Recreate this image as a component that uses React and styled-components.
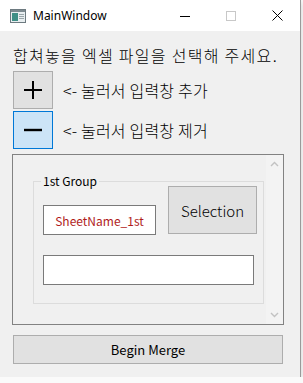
import React from 'react'
import styled, { createGlobalStyle } from 'styled-components'

const Global = createGlobalStyle`
  html, body { margin: 0; padding: 0; background: #fafafa; }
  body { font-family: "Noto Sans CJK KR", "Noto Sans", sans-serif; }
`

const Window = styled.div`
  width: 300px;
  height: 377px;
  background: #f0f0f0;
  border-right: 1px solid #9a9a9a;
  box-shadow: 0 2px 6px rgba(0,0,0,0.18);
  display: flex;
  flex-direction: column;
`

const TitleBar = styled.div`
  height: 31px;
  background: #fff;
  display: flex;
  align-items: center;
  flex-shrink: 0;
`

const AppIcon = styled.svg`
  margin-left: 10px;
  width: 16px;
  height: 14px;
`

const Title = styled.span`
  margin-left: 7px;
  font-family: "Noto Sans", sans-serif;
  font-size: 12px;
  color: #000;
  flex: 1;
`

const Caption = styled.div`
  width: 46px;
  height: 31px;
  display: flex;
  align-items: center;
  justify-content: center;
`

const Body = styled.div`
  padding: 14px 0 0 12px;
  display: flex;
  flex-direction: column;
`

const Label = styled.div`
  font-size: 16px;
  font-weight: 300;
  letter-spacing: 1.3px;
  line-height: 20px;
  height: 20px;
  margin-left: 1px;
  color: #000;
  white-space: nowrap;
`

const Row = styled.div`
  display: flex;
  align-items: center;
  margin-top: ${p => p.$top}px;
  margin-left: 1px;
`

const SquareButton = styled.div`
  box-sizing: border-box;
  width: 40px;
  height: 38px;
  background: ${p => (p.$active ? '#cce4f7' : '#e1e1e1')};
  border: 1px solid ${p => (p.$active ? '#0078d7' : '#adadad')};
  display: flex;
  align-items: center;
  justify-content: center;
`

const Hint = styled.span`
  margin-left: 10px;
  font-size: 16px;
  font-weight: 300;
  letter-spacing: 0.2px;
  color: #000;
  white-space: nowrap;
`

const ScrollArea = styled.div`
  box-sizing: border-box;
  margin-top: 5px;
  width: 272px;
  height: 171px;
  border: 1px solid #828282;
  display: flex;
`

const ScrollContent = styled.div`
  flex: 1;
  padding: 19px 2px 0 20px;
`

const Group = styled.fieldset`
  margin: 0;
  padding: 0 5px 18px 9px;
  border: 1px solid #dcdcdc;
  min-width: 0;
`

const Legend = styled.legend`
  padding: 0 2px;
  margin-left: -2px;
  font-size: 12px;
  line-height: 14px;
  color: #000;
`

const GroupRow = styled.div`
  display: flex;
  align-items: flex-end;
  margin-top: -2px;
`

const Field = styled.div`
  box-sizing: border-box;
  width: ${p => p.$w}px;
  height: 30px;
  background: #fff;
  border: 1px solid #7a7a7a;
  display: flex;
  align-items: center;
  justify-content: center;
  color: #b01c1c;
  font-size: 12px;
  margin-top: ${p => p.$top || 0}px;
`

const Button = styled.div`
  box-sizing: border-box;
  background: #e1e1e1;
  border: 1px solid #adadad;
  display: flex;
  align-items: center;
  justify-content: center;
  color: #000;
`

const SelectButton = styled(Button)`
  width: 89px;
  height: 48px;
  margin-left: 12px;
  margin-bottom: 1px;
  font-size: 15px;
  font-weight: 300;
`

const MergeButton = styled(Button)`
  width: 270px;
  height: 29px;
  margin-top: 10px;
  margin-left: 1px;
  font-size: 13px;
`

const ScrollBar = styled.div`
  width: 17px;
  background: #f3f3f3;
  display: flex;
  flex-direction: column;
  justify-content: space-between;
  align-items: center;
  padding: 6px 0;
`

const Chevron = ({ down }) => (
  <svg width="9" height="6" viewBox="0 0 9 6">
    <path
      d={down ? 'M1 1 L4.5 4.5 L8 1' : 'M1 5 L4.5 1.5 L8 5'}
      fill="none"
      stroke="#c2c2c2"
      strokeWidth="1.4"
    />
  </svg>
)

export default function App() {
  return (
    <>
      <Global />
      <Window>
        <TitleBar>
          <AppIcon viewBox="0 0 16 14">
            <rect x="0.5" y="0.5" width="15" height="13" fill="#e8eef0" stroke="#6d7a80" />
            <rect x="1" y="1" width="14" height="2" fill="#7d8a90" />
            <rect x="2" y="4" width="6" height="8" fill="#3f8f86" />
            <rect x="9" y="5" width="5" height="1" fill="#9aa6aa" />
            <rect x="9" y="7" width="5" height="1" fill="#9aa6aa" />
            <rect x="9" y="9" width="5" height="1" fill="#9aa6aa" />
          </AppIcon>
          <Title>MainWindow</Title>
          <Caption>
            <svg width="10" height="10" viewBox="0 0 10 10">
              <path d="M0 5.5 H10" stroke="#000" strokeWidth="1" />
            </svg>
          </Caption>
          <Caption>
            <svg width="10" height="10" viewBox="0 0 10 10">
              <rect x="0.5" y="0.5" width="9" height="9" fill="none" stroke="#c8c8c8" />
            </svg>
          </Caption>
          <Caption>
            <svg width="11" height="11" viewBox="0 0 11 11">
              <path d="M0.5 0.5 L10.5 10.5 M10.5 0.5 L0.5 10.5" stroke="#000" strokeWidth="1" />
            </svg>
          </Caption>
        </TitleBar>
        <Body>
          <Label>합쳐놓을 엑셀 파일을 선택해 주세요.</Label>
          <Row $top={6}>
            <SquareButton>
              <svg width="20" height="20" viewBox="0 0 20 20">
                <path d="M10 1 V19 M1 10 H19" stroke="#000" strokeWidth="2" />
              </svg>
            </SquareButton>
            <Hint>&lt;- 눌러서 입력창 추가</Hint>
          </Row>
          <Row $top={2}>
            <SquareButton $active>
              <svg width="20" height="20" viewBox="0 0 20 20">
                <path d="M1 10 H19" stroke="#000" strokeWidth="2.4" />
              </svg>
            </SquareButton>
            <Hint>&lt;- 눌러서 입력창 제거</Hint>
          </Row>
          <ScrollArea>
            <ScrollContent>
              <Group>
                <Legend>1st Group</Legend>
                <GroupRow>
                  <Field $w={113}>SheetName_1st</Field>
                  <SelectButton>Selection</SelectButton>
                </GroupRow>
                <Field $w={211} $top={20} />
              </Group>
            </ScrollContent>
            <ScrollBar>
              <Chevron />
              <Chevron down />
            </ScrollBar>
          </ScrollArea>
          <MergeButton>Begin Merge</MergeButton>
        </Body>
      </Window>
    </>
  )
}
